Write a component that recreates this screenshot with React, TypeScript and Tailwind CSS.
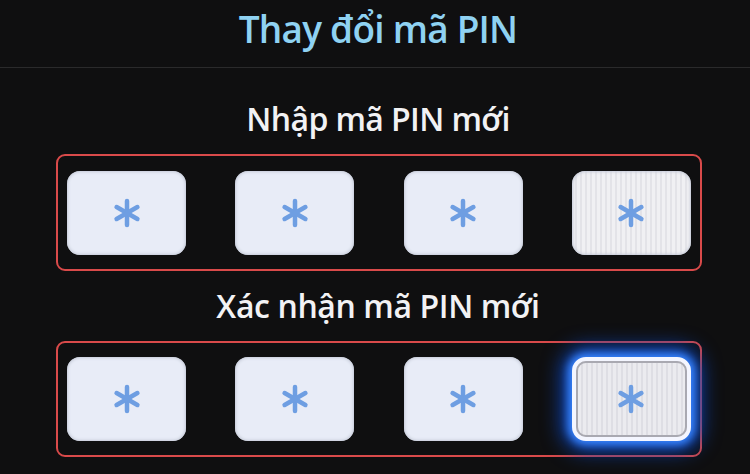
import React from "react";

function Star() {
  const angles = [90, 30, -30];
  return (
    <svg width="30" height="30" viewBox="0 0 30 30">
      {angles.map((a) => {
        const r = (a * Math.PI) / 180;
        const dx = Math.cos(r) * 12;
        const dy = Math.sin(r) * 12;
        return (
          <line
            key={a}
            x1={15 - dx}
            y1={15 - dy}
            x2={15 + dx}
            y2={15 + dy}
            stroke="#6e9ee2"
            strokeWidth="4.5"
            strokeLinecap="round"
          />
        );
      })}
    </svg>
  );
}

function Cell({ kind = "plain" }: { kind?: "plain" | "striped" | "focus" }) {
  if (kind === "focus") {
    return (
      <div className="w-[119px] h-[84px] rounded-[14px] border-[4px] border-[#f4f6ff] shadow-[0_0_8px_4px_#3a86ff,0_0_20px_10px_#0d44b8] flex items-center justify-center bg-[#d8d8de]">
        <div className="w-full h-full rounded-[10px] border-[2px] border-[#a9a9b1] bg-[repeating-linear-gradient(90deg,#ebebef_0px,#ebebef_3px,#dedee4_3px,#dedee4_5px)] flex items-center justify-center">
          <Star />
        </div>
      </div>
    );
  }
  const bg =
    kind === "striped"
      ? "bg-[repeating-linear-gradient(90deg,#f0f0f3_0px,#f0f0f3_3px,#e3e3e8_3px,#e3e3e8_5px)]"
      : "bg-[#e8ecf7]";
  return (
    <div className={`w-[119px] h-[84px] rounded-[13px] ${bg} shadow-[inset_0_0_3px_1px_#c5cad8] flex items-center justify-center`}>
      <Star />
    </div>
  );
}

export default function App() {
  return (
    <div
      className="w-[750px] h-[474px] bg-[#0f0f10] overflow-hidden flex flex-col"
      style={{ fontFamily: '"Open Sans", "DejaVu Sans", sans-serif' }}
    >
      <div className="h-[67px] flex justify-center pt-[5px] pl-[6px]">
        <span className="text-[37px] leading-[48px] font-semibold text-[#8fd2f2] tracking-[-0.8px]">
          Thay đổi mã PIN
        </span>
      </div>
      <div className="h-px bg-[#2a2a2b]" />
      <div className="h-[86px] flex justify-center pt-[31px] pl-[6px]">
        <span className="text-[32px] leading-[40px] font-semibold text-[#f2f2f4] tracking-[-0.6px]">
          Nhập mã PIN mới
        </span>
      </div>
      <div className="ml-[56px] w-[646px] h-[117px] border-2 border-[#d94a4a] rounded-[9px] flex items-center justify-between px-[9px]">
        <Cell />
        <Cell />
        <Cell />
        <Cell kind="striped" />
      </div>
      <div className="h-[70px] flex justify-center pt-[15px] pl-[6px]">
        <span className="text-[32px] leading-[40px] font-semibold text-[#f2f2f4] tracking-[-0.4px]">
          Xác nhận mã PIN mới
        </span>
      </div>
      <div className="ml-[56px] w-[646px] h-[116px] border-2 border-[#d94a4a] rounded-[9px] flex items-center justify-between px-[9px]">
        <Cell />
        <Cell />
        <Cell />
        <Cell kind="focus" />
      </div>
    </div>
  );
}
